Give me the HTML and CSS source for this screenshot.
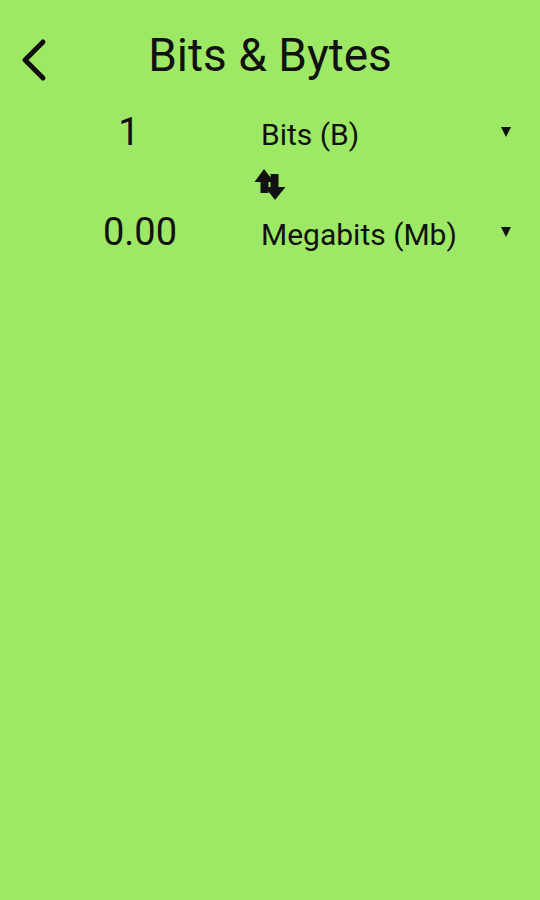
FILE: index.html
```html
<!DOCTYPE html>
<html lang="en">
<head>
    <meta charset="UTF-8">
    <meta name="viewport" content="width=device-width, initial-scale=1.0">
    <title>Bits &amp; Bytes</title>
    <link rel="stylesheet" href="styles.css">
</head>
<body>
    <div class="header">
        <button class="back-button" aria-label="Back">
            <svg width="28" height="44" viewBox="0 0 28 44">
                <polyline points="23,4 5,22 23,40" fill="none" stroke="#111" stroke-width="5" stroke-linecap="round" stroke-linejoin="round"/>
            </svg>
        </button>
        <h1>Bits &amp; Bytes</h1>
    </div>

    <div class="converter">
        <div class="row">
            <div class="value value-short">1</div>
            <div class="unit">
                <span>Bits (B)</span>
                <span class="caret"></span>
            </div>
        </div>

        <div class="swap">
            <svg width="32" height="33" viewBox="0 0 32 33">
                <polygon points="10,1 20,14 14.5,14 14.5,25 6.5,25 6.5,14 0.5,14" fill="#111"/>
                <polygon points="16.5,6 24.5,6 24.5,19 31.5,19 21,32 11,19 16.5,19" fill="#111"/>
            </svg>
        </div>

        <div class="row">
            <div class="value">0.00</div>
            <div class="unit">
                <span>Megabits (Mb)</span>
                <span class="caret"></span>
            </div>
        </div>
    </div>
</body>
</html>
```
FILE: styles.css
```css
body {
    font-family: Roboto, "Noto Sans", sans-serif;
    margin: 0;
    background-color: #9de865;
    color: #111;
    width: 540px;
    height: 900px;
}
.header {
    height: 104px;
    display: flex;
    align-items: center;
}
.back-button {
    background: none;
    border: none;
    padding: 0;
    margin-left: 20px;
    margin-top: 15px;
    display: flex;
    cursor: pointer;
}
.header h1 {
    flex: 1;
    margin: 5px 0 0 0;
    padding-right: 48px;
    text-align: center;
    font-size: 46px;
    font-weight: 400;
}
.converter {
    display: flex;
    flex-direction: column;
}
.row {
    display: grid;
    grid-template-columns: 120px 1fr;
    column-gap: 61px;
    padding-left: 80px;
    padding-right: 29px;
    height: 60px;
    align-items: center;
}
.value {
    text-align: center;
    font-size: 38px;
    margin-bottom: 4px;
}
.value-short {
    padding-right: 22px;
}
.unit {
    display: flex;
    justify-content: space-between;
    align-items: center;
    font-size: 30px;
}
.caret {
    width: 0;
    height: 0;
    border-left: 5px solid transparent;
    border-right: 5px solid transparent;
    border-top: 10px solid #111;
    margin-top: -4px;
}
.swap {
    display: flex;
    padding-left: 254px;
    height: 40px;
    align-items: center;
}
```
